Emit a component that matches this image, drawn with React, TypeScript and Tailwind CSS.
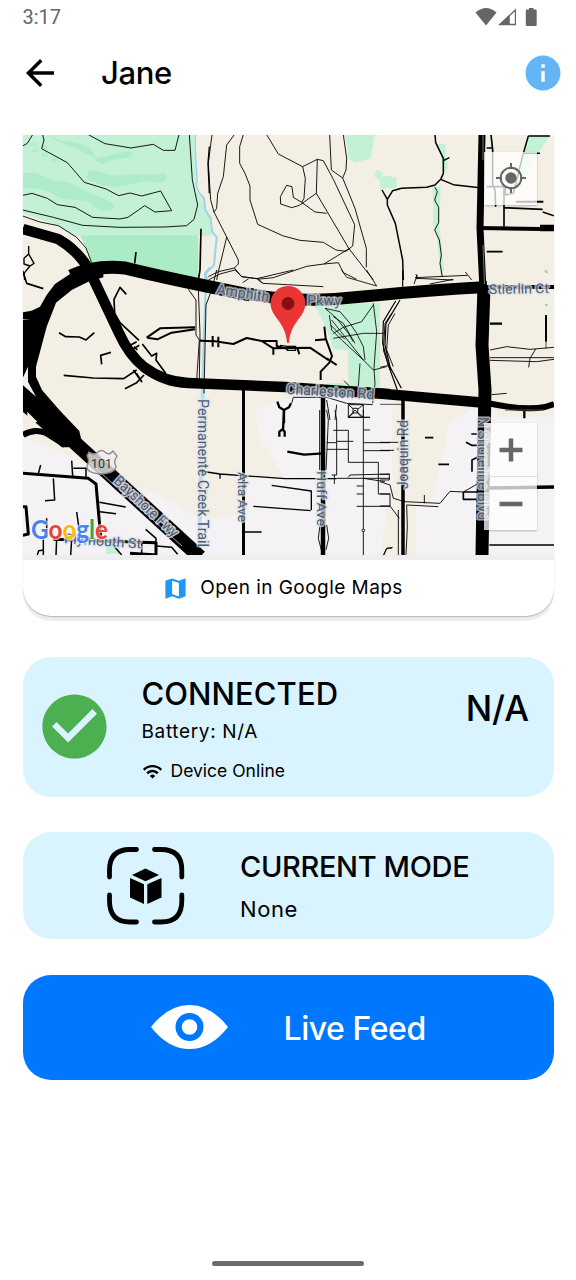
import type { ReactNode } from "react";
import { MdArrowBack, MdCheckCircle, MdInfo, MdMap, MdWifi } from "react-icons/md";

/* One map tile; its children are drawn in units of a third of a pixel. */
function Tile({ x, y, children }: { x: number; y: number; children: ReactNode }) {
  return <g transform={`translate(${x} ${y}) scale(0.33333)`}>{children}</g>;
}

function Label({ at, size = 14, rotate = 0, length, halo = 0.72, children }: { at: [number, number]; size?: number; rotate?: number; length: number; halo?: number; children: string }) {
  const shared = { fontFamily: "Roboto, sans-serif", fontSize: size, textLength: length, lengthAdjust: "spacingAndGlyphs" as const };
  return (
    <g transform={`translate(${at[0]} ${at[1]}) rotate(${rotate})`}>
      <text
        {...shared}
        fill="#4b5a75"
        stroke="#dfe3ea"
        strokeOpacity={halo}
        strokeWidth="3.2"
        strokeLinejoin="round"
        paintOrder="stroke"
      >
        {children}
      </text>
    </g>
  );
}

function CityMap() {
  return (
    <svg viewBox="23 135 531 420" className="block h-[420px] w-full" fill="none">
      <rect x="23" y="135" width="531" height="420" fill="#f3efe4" />

      {/* built-up areas */}
      <path d="M23 437 L63 453 L110 478 L155 493 L200 519 L245 515 L245 478 L285 478 L258 436 L256 408 L297 396 L396 402 L392 408 L392 555 L23 555Z" fill="#f4f2f4" />
      <path d="M416 555 L416 506 L430 503 L446 443 L448 424 L470 410 L490 406 L500 417 L554 417 L554 555Z" fill="#f4f2f4" />
      <path d="M381 555 L388 500 L400 490 L416 506 L416 555Z" fill="#f3efe4" />

      {/* parks and water */}
      <Tile x={20} y={130}>
        <path d="M8 14 H525 L530 180 L570 265 V318 H165 L110 285 L8 250Z" fill="#c3f1d6" />
        <path d="M180 316 H535 V446 L215 405 L205 370Z" fill="#abebc6" />
        <path d="M85 14 C125 42 170 30 205 52 C240 80 210 92 250 80 C290 72 330 55 338 72 C340 88 280 82 248 103 C225 96 228 78 195 70 C160 44 110 42 85 14Z" fill="#aeebc8" />
        <path d="M8 130 C45 120 70 140 105 152 C130 150 160 162 195 182 C235 200 280 212 284 230 C268 248 235 246 210 218 C165 202 130 218 95 188 C60 175 30 172 8 175Z" fill="#aeebc8" />
        <path d="M205 120 C240 120 260 142 310 135 C350 128 400 138 430 128 C448 135 445 152 420 158 C370 145 330 170 290 170 C260 170 230 165 200 145Z" fill="#aeebc8" />
        <path d="M36 44h10M68 52h10M40 62h10M70 75h10M98 90h10" stroke="#b0edc9" strokeWidth="10" strokeLinecap="round" />
        <path d="M527 14 C522 80 535 125 530 170 C540 205 552 190 554 225 C552 245 562 250 572 265" stroke="#9bd4e4" strokeWidth="4" />
        <path d="M570 412 L556 428 L562 450" stroke="#9bd4e4" strokeWidth="6" />
      </Tile>
      <Tile x={200} y={130}>
        <path d="M0 210 L22 260 L36 318 H0Z" fill="#c3f1d6" />
        <path d="M436 14 H524 L512 85 L466 98 L446 86Z M532 118 L550 130 L538 150 L522 138Z M556 138 L590 142 V175 L556 175 L542 155Z" fill="#c3f1d6" />
        <path d="M0 192 L12 205 L16 240 L32 265 L36 305 L50 322 L42 405 L15 432 L18 462 L12 600 L4 900" stroke="#9bd4e4" strokeWidth="6" />
      </Tile>
      <Tile x={380} y={130}>
        <path d="M0 142 L15 138 L50 145 L48 165 L15 176 L0 170Z M172 42 L197 42 L197 80 L204 110 L190 136 L186 90Z M158 168 L182 172 L178 290 L184 340 L192 420 L182 440 L172 330 L160 290Z M445 18 L510 18 L440 118 L400 190 L378 195 L425 90Z" fill="#c3f1d6" />
        <path d="M492 424l5-6 7 7z" fill="#9bd4e4" />
      </Tile>
      <Tile x={200} y={270}>
        <path d="M335 100 H540 V355 H380 V340 H445 V240 L400 236 L380 180 L360 135Z" fill="#c3f1d6" />
      </Tile>
      <path d="M203 385 L199 555" stroke="#b4dfeb" strokeWidth="4" />
      <path d="M106 545h14v9h-14z" fill="#c3f1d6" />
      <path d="M545 272h3M545 305h3" stroke="#9bd4e4" strokeWidth="2" />

      {/* trails and streets */}
      <g stroke="#000" strokeWidth="2.700" strokeLinejoin="round">
        <Tile x={20} y={130}>
          <path d="M8 48 L22 40 L38 14 M68 14 L72 30 L65 56 L142 98 L193 157 L258 177 L296 197 L330 189 L365 198 L422 183 L455 242 L405 246 L374 227 L324 262 L300 267 L218 262 L165 232 L112 224 L82 205 L36 190 L8 196" />
          <path d="M205 14 L255 41 L333 54 L400 43 L430 61 L465 61 L477 14 M508 14 L517 150 L533 225 L522 268 L500 287 L435 291 L300 292 L188 286 L100 262 L8 240 M8 258 L60 276 L115 287 L170 322 L198 354 L215 398" />
          <path d="M568 50 L564 100 L568 190" strokeWidth="4" />
          <path d="M543 296 L540 420 L535 450 M348 366 L344 400" strokeWidth="5" />
          <path d="M26 348 V372 L12 385 V402 L30 408 L42 400 L26 372 M30 408 L12 430 L14 450" strokeWidth="4" />
        </Tile>
        <Tile x={200} y={130}>
          <path d="M36 14 L25 100 L32 210 L42 246 L115 390 L115 402 L103 414 L55 425 L25 440 M103 14 L80 45 L70 140 L53 190 L50 235 L42 246 M80 322 L55 425 L50 450" />
          <path d="M130 14 L119 50 L119 100 L135 130 L150 168 L150 210 L173 283 L250 318 L300 331 L370 337 L408 360 L438 364 L458 348 L464 284 L400 148 L370 92 L352 88 L308 110 L235 72 L200 14" />
          <path d="M308 110 L316 145 L312 205 L305 217 L280 202 L276 170 L260 166 L241 200 L242 222 L275 233 L298 226 L349 190 L352 88 M305 217 L345 246 L380 250 M349 190 L447 356 L520 450 M389 14 L394 120 L428 144 L438 120 L440 85 L430 14 M428 144 L465 235 L499 355 V412" />
          <path d="M103 414 L125 440 L180 447 L220 443 L320 409 L372 402 L447 356 M372 402 L415 398 L430 428 L470 448" />
        </Tile>
        <Tile x={380} y={130}>
          <path d="M165 14 L167 38 L190 85 L190 130 L182 148 L165 165 L140 172 L65 175 L38 182 L22 208 L6 180 M22 208 V225 L46 280 L68 390 L70 450 M190 92 L208 83 M182 148 L220 164 L300 173" strokeWidth="4.5" />
          <path d="M165 172 L172 185 L164 210 L176 232 V278 L164 300 L178 330 L184 375 L180 400 L187 440" />
          <path d="M333 14 L338 60 V165 L345 180 L347 230 M372 170 V290 M320 170 H374 M320 54 H340 M372 233 L488 238 M320 365 H368" strokeWidth="5" />
          <path d="M488 246 L522 257 M445 18 H510 M445 18 L430 70 L400 190 L376 195 V170 M430 70 H480" strokeWidth="4.500" />
          <path d="M408 215 H490" strokeWidth="6" />
          <path d="M108 432 L112 448 M105 443 L262 436 M256 426 L275 450" />
        </Tile>
        <Tile x={20} y={270}>
          <path d="M8 2 L20 40 L70 56 M117 188 L137 200 L178 201 L198 210 L223 188 M245 283 L242 256 L273 247 M131 316 L220 324 L311 326 L350 300 M315 356 L350 338 L372 315" strokeWidth="5" />
          <path d="M319 73 L300 52 L282 88 L284 130 L300 158 L357 211 M367 222 L395 258 L410 250 L408 270 L437 310 M332 225 L350 215 M335 240 L358 226 M342 230 L352 240 M340 300 L365 335 L350 310" strokeWidth="5" />
          <path d="M380 203 L420 175 L525 172 M382 203 L412 208 L455 188 L525 178" strokeWidth="6" />
          <path d="M505 58 L528 90 V195 L538 210 L530 330 M535 58 L540 190 L538 330 M540 210 L570 215" />
        </Tile>
        <Tile x={200} y={270}>
          <path d="M0 212 L45 214 L100 222 L140 204 L185 213 L220 235 L330 233 L385 270 M185 213 H230 V228 L262 237 M220 235 V254 M293 236 L298 253 M38 198 V230 M55 200 V232" strokeWidth="6" />
          <path d="M262 229 H287 V241 H262Z M240 226 L262 229" strokeWidth="4" />
          <path d="M373 170 L377 205 L396 258 L388 278 L362 305 V330 M345 211 L377 208 M380 265 L410 285" strokeWidth="6" />
          <path d="M25 30 L60 12 L105 0 L125 20 L170 26 L188 40 L370 50 M128 38 L146 26 M188 40 L175 26 M170 26 L280 0 M50 0 L35 60 L18 105 L12 370" />
          <path d="M425 0 L440 22 L530 48 M500 0 L530 48 M375 115 L420 125 L450 160 L470 190 L490 230 L495 270 M388 135 L395 180 L425 210 L490 270 L520 300 M395 150 L490 270 M400 190 L430 172 L485 155 L520 105 M400 205 L490 190 H555 M480 280 L475 350 M520 100 L530 185 L522 295 L525 340 L518 400 M520 300 L560 290" strokeWidth="2.500" />
          <path d="M375 115 L410 145 L445 190 L460 215 M392 165 L435 208 M400 140 L430 160 L465 220" strokeWidth="2.500" />
          <path d="M575 130 L555 160 L550 240 L570 300 M585 130 L565 165 L560 240 L580 290" />
          <path d="M275 400 L280 382 L380 382 L440 400 L518 404 M380 390 L390 450 M410 404 L405 450 M432 332 L450 350 L570 358" />
          <path d="M445 404 H490 V442 H445Z M445 404 L490 442 M445 442 L490 404 M490 442 H510" />
          <rect x="459" y="415" width="14" height="14" fill="#f4f2f4" />
          <path d="M232 395 L238 412 L252 420 L267 412 L273 400 M252 418 V460" strokeWidth="7" />
        </Tile>
        <Tile x={380} y={270}>
          <path d="M68 0 V50 M47 93 L10 155 L8 220 L25 285 L52 360 M60 90 L18 160 L15 225 L30 290 L64 355" strokeWidth="3.500" />
          <path d="M108 25 L220 30 M102 42 L112 15 M150 42 L220 28 M330 240 L380 230 L450 238 L522 232 M330 263 H522 M330 271 L470 275 L522 268 M467 237 L450 265 L446 292 M335 374 L380 370 M0 292 L28 286" />
          <path d="M330 161 H366 M433 420 V445" strokeWidth="7" />
          <path d="M498 135 V215" strokeWidth="6" />
          <path d="M498 215 V235 M0 403 H65" strokeWidth="2" />
        </Tile>
        <Tile x={20} y={410}>
          <path d="M8 190 L205 205 L228 222 L242 380 M8 290 H18 L25 372 L8 376 M100 388 L408 398 V435 M330 430 L410 435" strokeWidth="9" />
          <path d="M62 165 L55 192 M155 152 L158 198 M160 175 H198 V202 M100 205 L104 270 L75 272 M238 277 L317 291 M240 305 L288 311 M170 306 L177 355 M80 325 V360 M377 358 L408 385 V400 M365 398 H410 M365 395 V430 M410 408 L455 412 L473 433 M70 380 V435 M110 385 L108 435 M155 388 L152 435 M52 435 L56 422 L72 420 M275 400 L285 412 L305 435" strokeWidth="4.5" />
        </Tile>
        <Tile x={200} y={410}>
          <path d="M0 183 L60 192 L255 206 H410 M60 192 V206 M215 226 L334 243 V300 M160 289 L332 302 M135 366 H185" strokeWidth="4" />
          <path d="M262 125 L312 134 L370 130 M252 0 L249 60 M238 80 V65 L247 58 L254 65 V80" strokeWidth="7" />
          <path d="M380 0 L385 30 L378 180 M359 0 V180 M405 0 L410 30 V195 H395 M380 98 H410 M380 118 H445 M400 61 H445 V157 H535 V252 H570 M410 94 H460 M490 0 V435 M490 98 H570 M490 122 H570 M445 22 H510 M490 60 H510 M410 205 H570 M445 202 L450 195 L570 192 M490 205 L555 215 M470 228 H490 M470 252 H490 M470 289 H570 M445 22 L465 0 L485 22 M403 195 V222" />
          <path d="M360 345 L355 385 L364 420 M380 345 L386 385 L378 420" />
          <circle cx="490" cy="361" r="4" fill="#f4f2f4" />
          <path d="M550 435 L560 415 H575" />
        </Tile>
        <Tile x={380} y={410}>
          <path d="M0 97 H55 M0 121 H42 M0 193 H28 V210 H0 M0 215 L30 225 L40 265 L75 275 L180 280 L210 244 L250 246 L292 222 M0 252 H30 V288 H0 M30 288 L58 325 M80 285 L175 290 M133 255 V280 M55 300 V435 M80 285 L82 350 L78 435 M12 435 L20 415 L38 412" />
          <path d="M135 83 H160 M175 163 H207 M250 246 V268 H295 M250 246 H295 M258 97 L275 106 H292 M274 72 H292 M292 142 L276 150 V185 M328 405 H522" strokeWidth="5" />
        </Tile>
      </g>

      {/* main roads */}
      <g stroke="#000" strokeLinejoin="round">
        <path d="M243.500 390 V555" strokeWidth="3" />
        <path d="M323 390 V555" strokeWidth="4.500" />
        <path d="M403 400 V555" strokeWidth="3.500" />
        <path d="M487 287 H554" strokeWidth="4" />
        <path d="M487 287 Q430 290 380 295 L335 299 Q290 302 250 294" strokeWidth="12" />
        <path d="M250 295 Q165 278 125 268 Q95 265 71 276" strokeWidth="13" />
        <path d="M23 229 L58 239 Q82 253 92 276 L119 333 Q129 355 144 367 Q164 382 188 383 L285 387 L385 394 L487 403" strokeWidth="10.500" />
        <path d="M23 229 L60 239 Q77 248 86 266" strokeWidth="8" />
        <path d="M487 403 Q525 411 545 407 L554 404" strokeWidth="6" />
        <path d="M505 410 H544" stroke="#555" strokeWidth="1" />
        <path d="M479 228 L540 229" strokeWidth="4" />
        <path d="M540 228 H554" strokeWidth="6.500" />
        <path d="M482 135 L480 228 L484 310 L482 345 L485 385 V440 L483 555" strokeWidth="7" />
        <path d="M484 287 L482 345 L485 390 L484 440 L482 555" strokeWidth="13" />
        <path d="M483 135 V160 M483 245 L484.500 284" stroke="#777" strokeWidth="1" />
        <path d="M490 488 L554 487" strokeWidth="3.500" />
      </g>
      <Tile x={20} y={270}>
        <path d="M250 5 V22 L205 35 L155 60 L108 98 L80 170 L48 290 V320 L66 360 L118 420 L178 483 L184 510 L145 532 L125 532 L70 478 L8 425 V345 L48 380 L24 335 V290 L8 325 V150 H32 L8 148 V127 L35 122 L60 110 L80 75 L105 42 L150 12 L200 -8Z" fill="#000" />
        <path d="M22 425 L22 468 L52 455Z" fill="#f3efe4" />
      </Tile>
      <path d="M23 435 Q34 428 46 433 L65 445" stroke="#000" strokeWidth="6" />
      <path d="M73 441 L200 557" stroke="#000" strokeWidth="14.500" />
      <path d="M90 463 L123 493 L182 546" stroke="#aaa" strokeWidth="1" />

      {/* street names */}
      <Label at={[216, 294]} size={14.500} rotate={8.500} length={53}>Amphith</Label>
      <Label at={[307, 305]} size={14} rotate={1} length={34}>Pkwy</Label>
      <Label at={[286, 394]} size={15} rotate={3.500} length={88}>Charleston Rd</Label>
      <Label at={[489, 294]} size={13.500} rotate={-1} length={60}>Stierlin Ct</Label>
      <Label at={[198, 399]} size={14} rotate={90} length={148} halo={0.6}>Permanente Creek Trail</Label>
      <Label at={[238, 472]} size={13.500} rotate={90} length={50}>Alta Ave</Label>
      <Label at={[317, 471]} size={13.500} rotate={90} length={55}>Huff Ave</Label>
      <Label at={[408, 489]} size={14} rotate={-90} length={69}>Joaquin Rd</Label>
      <Label at={[478, 417]} size={14.500} rotate={90} length={103}>N Shoreline Blvd</Label>
      <Label at={[113, 482]} size={14.500} rotate={43} length={82} halo={0.85}>Bayshore Fwy</Label>
      <Label at={[64, 543]} size={13.500} rotate={4} length={77}>Plymouth St</Label>

      {/* route shield */}
      <path d="M89 452 Q94 456 98 452 Q101 449 105 452 Q109 456 113 451 L117 456 Q113 462 116 466 Q116 473 101 474 Q86 473 87 466 Q90 460 87 456Z" fill="#eeeeee" fillOpacity="0.8" stroke="#888" strokeWidth="1.300" />
      <text x="101.500" y="467.500" textAnchor="middle" fontFamily="Roboto, sans-serif" fontSize="12.500" fill="#333">101</text>

      {/* wordmark */}
      <text x="31" y="539" textLength="77" lengthAdjust="spacingAndGlyphs" fontFamily="Lato, sans-serif" fontSize="26.500" fontWeight="700" stroke="#fff" strokeOpacity="0.7" strokeWidth="2" paintOrder="stroke">
        <tspan fill="#4285f4">G</tspan>
        <tspan fill="#ea4335">o</tspan>
        <tspan fill="#fbbc05">o</tspan>
        <tspan fill="#4285f4">g</tspan>
        <tspan fill="#34a853">l</tspan>
        <tspan fill="#ea4335">e</tspan>
      </text>

      {/* marker */}
      <path d="M287 342.500 C286 329 280 323 274.500 315 Q270.500 309 270.500 303.500 A17.500 17.500 0 0 1 305.500 303.500 Q305.500 309 301.500 315 C296 323 290 329 289 342.500 Q288 344 287 342.500Z" fill="#ea3535" />
      <circle cx="288" cy="303.500" r="6.500" fill="#8a0f0f" />
    </svg>
  );
}

function MapCard() {
  return (
    <section className="relative mx-[22.5px] h-[481px] overflow-hidden rounded-b-[28px] bg-white shadow-[0_1px_1px_#b5b5b5,0_5px_1px_#ededed]">
      <CityMap />
      <div className="h-[5px] bg-[#eeeeee]" />
      <button className="flex h-[56px] w-full items-center justify-center gap-[11px] pt-px pr-[11px]">
        <MdMap className="-mt-px size-[27px] text-[#2196f3]" />
        <span className="text-[19px] tracking-[0.45px]">Open in Google Maps</span>
      </button>
      <div className="absolute top-[16.500px] right-[16.500px] flex size-[53px] items-center justify-center bg-white/75 shadow-[0_1px_2px_rgba(0,0,0,0.25)]">
        <svg viewBox="0 0 32 32" className="size-8" fill="none" stroke="#666" strokeWidth="2">
          <circle cx="16" cy="16" r="10.300" />
          <circle cx="16" cy="16" r="5.700" fill="#666" stroke="none" />
          <path d="M16 1v6M16 25v6M1 16h6M25 16h6" />
        </svg>
      </div>
      <div className="absolute top-[288px] right-[16.500px] flex h-[107px] w-[53px] flex-col divide-y divide-[#dddddd] bg-white/75 shadow-[0_1px_2px_rgba(0,0,0,0.25)]">
        <div className="flex flex-1 items-center justify-center">
          <svg viewBox="0 0 24 24" className="size-6" stroke="#666" strokeWidth="4.500">
            <path d="M12 .5v23M.5 12h23" />
          </svg>
        </div>
        <div className="flex flex-1 items-center justify-center">
          <svg viewBox="0 0 24 24" className="size-6" stroke="#666" strokeWidth="4.500">
            <path d="M.5 12h23" />
          </svg>
        </div>
      </div>
    </section>
  );
}

function StatusBar() {
  return (
    <div className="flex h-[34px] items-center justify-between pr-[39px] pl-[22.500px] text-[#666]">
      <span className="font-[Roboto] text-[20px] leading-none">3:17</span>
      <svg viewBox="475 7 62 20" className="h-5 w-[62px]" fill="#666">
        <path d="M475.500 12.500 Q486 3.500 496.500 12.500 L486 25.500Z" />
        <path d="M498 25.200 L516 8.500 V25.200Z M509.800 16 V23.800 H514.800 V11.500Z" fillRule="evenodd" />
        <path d="M529 8h4.500v1.500h2q1.200 0 1.200 1.200v14q0 1.200-1.200 1.200h-8.500q-1.200 0-1.200-1.200v-14q0-1.200 1.200-1.200h2z" />
      </svg>
    </div>
  );
}

function ObjectScanIcon() {
  return (
    <svg viewBox="107 847 78 78" className="size-[78px]" fill="none">
      <path
        d="M109.500 877 V870 Q109.500 849.500 130 849.500 H136.500 M154.500 849.500 H161 Q181.800 849.500 181.800 870 V877 M181.800 895 V901 Q181.800 922 161 922 H154.500 M136.500 922 H130 Q109.500 922 109.500 901 V895"
        stroke="#000"
        strokeWidth="4.800"
        strokeLinecap="round"
      />
      <path d="M145.500 868.500 L159 875 L145.500 881.300 L132 875Z M130 878 L144 884.300 V904 L130 897.500Z M147.300 884.300 L161.500 878 V897.500 L147.300 904Z" fill="#000" />
    </svg>
  );
}

function EyeIcon() {
  return (
    <svg viewBox="0 0 77 44" className="h-11 w-[77px]">
      <path d="M0 22 Q17 0 38.500 0 T77 22 Q60 44 38.500 44 T0 22Z" fill="#fff" />
      <circle cx="38.500" cy="22" r="10.900" fill="#fff" stroke="#0077ff" strokeWidth="6.200" />
    </svg>
  );
}

export default function App() {
  return (
    <main className="flex h-[1280px] w-[576px] flex-col bg-white font-[Inter,sans-serif] text-black">
      <StatusBar />
      <header className="flex h-[78px] items-center pr-[12.500px] pl-[19px]">
        <MdArrowBack className="size-[42px]" />
        <h1 className="mt-px ml-[40px] flex-1 text-[31px] font-medium tracking-[-0.4px]">Jane</h1>
        <MdInfo className="size-[42px] text-[#64b5f6]" />
      </header>
      <div className="mt-[23px]">
        <MapCard />
      </div>

      <section className="mx-[22.500px] mt-[41px] flex h-[140px] rounded-[28px] bg-[#d9f3ff] pl-[13.500px]">
        <MdCheckCircle className="mt-[31px] size-[77px] text-[#4caf50]" />
        <div className="ml-[28.500px] flex-1">
          <h2 className="mt-[19px] text-[31px] leading-[36px] font-medium tracking-[0.05px]">CONNECTED</h2>
          <p className="mt-[8px] text-[19px] leading-6 tracking-[0.65px]">Battery: N/A</p>
          <p className="mt-[16px] flex items-center gap-[8px] text-[17.500px] leading-[22px] tracking-[0px]">
            <MdWifi className="size-[21px]" />
            Device Online
          </p>
        </div>
        <div className="mt-[30px] pr-[24.500px] text-[35px] leading-[42px] font-medium">N/A</div>
      </section>

      <section className="mx-[22.500px] mt-[35px] flex h-[107px] rounded-[28px] bg-[#d9f3ff] pt-[15px] pl-[84px]">
        <ObjectScanIcon />
        <div className="ml-[55.500px]">
          <h2 className="mt-[2px] text-[29px] leading-[36px] font-medium tracking-[-0.35px]">CURRENT MODE</h2>
          <p className="mt-[10px] text-[22px] leading-[28px] tracking-[0.6px]">None</p>
        </div>
      </section>

      <button className="mx-[22.500px] mt-[35.500px] flex h-[105px] items-center rounded-[28px] bg-[#0077ff] pl-[128px] text-white">
        <EyeIcon />
        <span className="mt-[3px] ml-[56px] text-[32px] font-medium tracking-[-0.45px]">Live Feed</span>
      </button>

      <div className="mx-auto mt-auto mb-[14px] h-[5px] w-[152px] rounded-full bg-[#6b6b6b]" />
    </main>
  );
}
